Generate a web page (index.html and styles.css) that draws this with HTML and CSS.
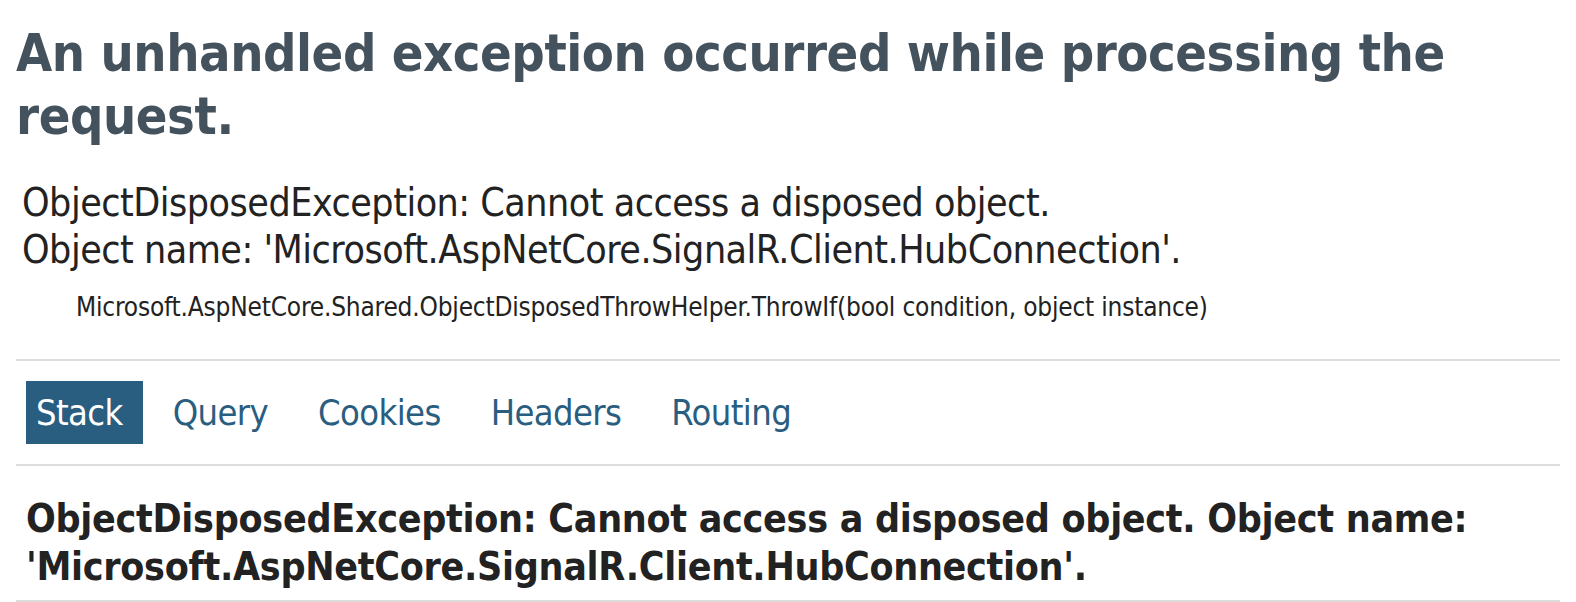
FILE: index.html
```html
<!DOCTYPE html>
<html lang="en">
<head>
<meta charset="utf-8">
<title>Internal Server Error</title>
<link rel="stylesheet" href="styles.css">
</head>
<body>
<h1 class="title">An unhandled exception occurred while processing the request.</h1>
<div class="titleerror">ObjectDisposedException: Cannot access a disposed object.<br>Object name: 'Microsoft.AspNetCore.SignalR.Client.HubConnection'.</div>
<p class="location">Microsoft.AspNetCore.Shared.ObjectDisposedThrowHelper.ThrowIf(bool condition, object instance)</p>
<ul class="tabs">
  <li class="tab selected">Stack</li>
  <li class="tab">Query</li>
  <li class="tab">Cookies</li>
  <li class="tab">Headers</li>
  <li class="tab">Routing</li>
</ul>
<div class="stackpage">
  <h2 class="stackerror">ObjectDisposedException: Cannot access a disposed object. Object name: 'Microsoft.AspNetCore.SignalR.Client.HubConnection'.</h2>
</div>
</body>
</html>
```

FILE: styles.css
```css
html, body {
  background: #fff;
}

body {
  margin: 0 16px;
  padding: 0;
  font-family: "DejaVu Sans Condensed", "DejaVu Sans", Verdana, sans-serif;
  font-size: 26px;
  color: #222;
}

.title {
  margin: 22px 0 26px 0;
  font-size: 52px;
  line-height: 63px;
  font-weight: bold;
  letter-spacing: -0.45px;
  color: #44525e;
}

.titleerror {
  padding: 6px 6px 12px 6px;
  font-size: 39px;
  line-height: 46.5px;
  font-weight: normal;
  letter-spacing: -0.5px;
}

.location {
  margin: 7px 0 0 60px;
  font-size: 26px;
  line-height: 31px;
  letter-spacing: -0.2px;
}

.tabs {
  display: flex;
  list-style: none;
  margin: 36px 0 0 0;
  padding: 20px 0;
  border-top: 2px solid #ddd;
  border-bottom: 2px solid #ddd;
  font-size: 36px;
  line-height: 43px;
  letter-spacing: -0.6px;
}

.tab {
  margin: 0 10px;
  padding: 10px 20px 10px 10px;
  color: #2a5e80;
}

.tab.selected {
  background: #2a5e80;
  color: #fff;
}

.stackerror {
  margin: 19px 0 0 0;
  padding: 10px;
  font-size: 39px;
  line-height: 47.5px;
  font-weight: bold;
  letter-spacing: -0.3px;
  color: #222;
  border-bottom: 2px solid #ddd;
}
```
